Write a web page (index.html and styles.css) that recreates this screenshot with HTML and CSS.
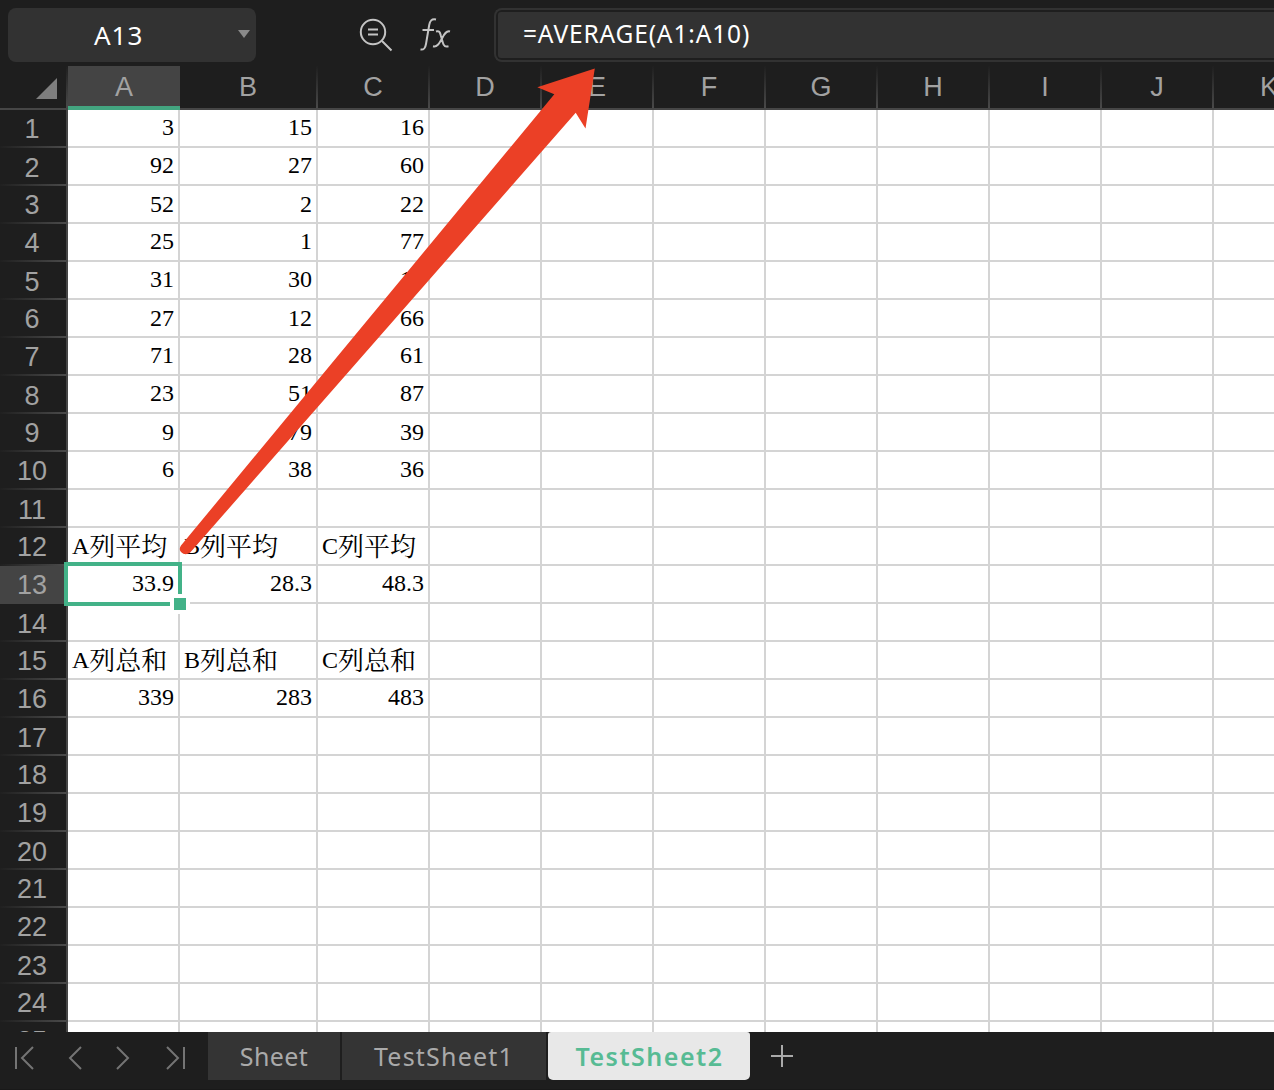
FILE: index.html
```html
<!DOCTYPE html>
<html lang="zh-CN">
<head>
<meta charset="utf-8">
<title>TestSheet2</title>
<link rel="stylesheet" href="styles.css">
</head>
<body>
<div class="app">
  <header class="toolbar">
    <div class="name-box"><span>A13</span><svg class="caret" width="12" height="8" viewBox="0 0 12 8"><path d="M0 0H12L6 8Z"/></svg></div>
    <div class="tools">
      <svg width="34" height="34" viewBox="0 0 34 34"><circle cx="14" cy="14" r="12.2"/><path d="M23 23L32.500 32.500M9 11.500H19M9 16.500H19"/></svg>
      <svg class="fx" width="32" height="34" viewBox="0 0 32 34"><path d="M16 1.500C11.500 .5 10 3 9.200 7L6 26C5.200 30.500 4 32 .5 31.500M2.500 12H14M16 13.500C19 12.500 20 14 20.800 17.500L22.800 24.500C23.800 28.500 25.500 29 28.500 28.200M30 13.500C26.500 12.500 24.500 15.500 22 20.500C19 26 17 29.300 13 28.200"/></svg>
    </div>
    <div class="formula"><div class="formula-text">=AVERAGE(A1:A10)</div></div>
  </header>

  <div class="columns">
    <div class="corner"><svg width="21" height="21" viewBox="0 0 21 21"><path d="M21 0V21H0Z"/></svg></div>
    <div class="col selected">A</div><div class="col wide">B</div><div class="col">C</div><div class="col">D</div><div class="col">E</div><div class="col">F</div><div class="col">G</div><div class="col">H</div><div class="col">I</div><div class="col">J</div><div class="col">K</div>
  </div>

  <main class="sheet">
    <div class="row"><b>1</b><i>3</i><i>15</i><i>16</i></div>
    <div class="row"><b>2</b><i>92</i><i>27</i><i>60</i></div>
    <div class="row"><b>3</b><i>52</i><i>2</i><i>22</i></div>
    <div class="row"><b>4</b><i>25</i><i>1</i><i>77</i></div>
    <div class="row"><b>5</b><i>31</i><i>30</i><i>17</i></div>
    <div class="row"><b>6</b><i>27</i><i>12</i><i>66</i></div>
    <div class="row"><b>7</b><i>71</i><i>28</i><i>61</i></div>
    <div class="row"><b>8</b><i>23</i><i>51</i><i>87</i></div>
    <div class="row"><b>9</b><i>9</i><i>79</i><i>39</i></div>
    <div class="row"><b>10</b><i>6</i><i>38</i><i>36</i></div>
    <div class="row"><b>11</b></div>
    <div class="row label"><b>12</b><i>A<span>列平均</span></i><i>B<span>列平均</span></i><i>C<span>列平均</span></i></div>
    <div class="row current"><b>13</b><i class="active">33.9<svg class="selection" width="126" height="52" viewBox="0 0 126 52"><path class="halo" d="M106 32H126V52H106Z"/><path d="M0 0H118V32H114V4H4V40H106V44H0ZM110 36H122V48H110Z"/></svg></i><i>28.3</i><i>48.3</i></div>
    <div class="row"><b>14</b></div>
    <div class="row label"><b>15</b><i>A<span>列总和</span></i><i>B<span>列总和</span></i><i>C<span>列总和</span></i></div>
    <div class="row"><b>16</b><i>339</i><i>283</i><i>483</i></div>
    <div class="row"><b>17</b></div>
    <div class="row"><b>18</b></div>
    <div class="row"><b>19</b></div>
    <div class="row"><b>20</b></div>
    <div class="row"><b>21</b></div>
    <div class="row"><b>22</b></div>
    <div class="row"><b>23</b></div>
    <div class="row"><b>24</b></div>
    <div class="row"><b>25</b></div>
  </main>

  <footer class="tabs">
    <div class="nav">
      <svg width="20" height="24" viewBox="0 0 20 24"><path d="M2 1V23M19 1L8 12L19 23"/></svg>
      <svg width="14" height="24" viewBox="0 0 14 24"><path d="M13 1L2 12L13 23"/></svg>
      <svg width="14" height="24" viewBox="0 0 14 24"><path d="M1 1L12 12L1 23"/></svg>
      <svg width="20" height="24" viewBox="0 0 20 24"><path d="M1 1L12 12L1 23M18 1V23"/></svg>
    </div>
    <div class="tab first">Sheet</div>
    <div class="tab second">TestSheet1</div>
    <div class="tab open">TestSheet2</div>
    <svg class="add" width="22" height="22" viewBox="0 0 22 22"><path d="M11 0V22M0 11H22"/></svg>
  </footer>

  <svg class="arrow" width="1274" height="1090" viewBox="0 0 1274 1090"><path d="M594.800 68.400L537.300 87.300L554.300 94.300L181 545.500Q178.500 549 181 552Q185 556 190 552.800L575.700 112.700L585.500 128.500Z"/></svg>
</div>
</body>
</html>
```
FILE: styles.css
```css
* { box-sizing: border-box; }
body { margin: 0; background: #1e1e1e; }
.app {
  position: relative;
  width: 1274px;
  height: 1090px;
  overflow: hidden;
  display: flex;
  flex-direction: column;
  font-family: "Noto Sans", sans-serif;
}

.toolbar { display: flex; height: 66px; padding: 8px 0 4px 8px; flex: none; }
.name-box {
  position: relative;
  width: 248px;
  height: 54px;
  border-radius: 8px;
  background: #323232;
  color: #fff;
  font-size: 26px;
  line-height: 54px;
  padding-left: 86px;
  letter-spacing: 1px;
}
.caret { position: absolute; right: 6px; top: 22px; fill: #8a8a8a; }
.tools { display: flex; width: 238px; padding: 10px 0 0 103px; gap: 27px; }
.tools svg { flex: none; fill: none; stroke: #c4c4c4; stroke-width: 2; }
.formula {
  flex: 1;
  height: 54px;
  border: 2px solid #323232;
  border-right: 0;
  border-radius: 8px 0 0 8px;
  padding: 2px 0 2px 2px;
}
.formula-text {
  height: 46px;
  border-radius: 3px 0 0 3px;
  background: #323232;
  color: #fff;
  font-size: 24.5px;
  line-height: 44px;
  letter-spacing: .85px;
  padding-left: 25px;
  white-space: nowrap;
}

.columns {
  display: flex;
  height: 44px;
  flex: none;
  border-bottom: 2px solid #464646;
  font: 27px/42px "Liberation Sans", Arial, sans-serif;
  color: #a2a2a2;
}
.corner, .col {
  flex: none;
  border-right: 2px solid;
  border-image: linear-gradient(#1e1e1e, #4a4a4a) 1;
  border-width: 0 2px 0 0;
}
.corner { width: 68px; padding: 12px 0 0 36px; }
.corner svg { display: block; fill: #7e7e7e; }
.col { width: 112px; text-align: center; }
.col.wide { width: 138px; }
.col.selected {
  height: 44px;
  border: 0;
  background: #444;
  border-bottom: 4px solid #43a580;
}

.sheet {
  height: 922px;
  flex: none;
  overflow: hidden;
  background:
    linear-gradient(#d4d4d4, #d4d4d4) 178px 0 / 2px 100% no-repeat,
    linear-gradient(#d4d4d4, #d4d4d4) 316px 0 / 2px 100% no-repeat,
    linear-gradient(90deg, #fff 318px, transparent 318px),
    linear-gradient(90deg, transparent 110px, #d4d4d4 110px) 318px 0 / 112px 100%,
    #fff;
}
.row {
  display: grid;
  grid-template-columns: 68px 112px 138px 112px;
  height: 38px;
  background: linear-gradient(#d4d4d4, #d4d4d4) 0 36px / 100% 2px no-repeat;
}
.row b {
  height: 38px;
  border-right: 2px solid #464646;
  background:
    linear-gradient(90deg, #202020, #4a4a4a) 0 36px / 100% 2px no-repeat,
    #1e1e1e;
  color: #a2a2a2;
  font: 27px/38px "Liberation Sans", Arial, sans-serif;
  text-align: center;
  padding-right: 2px;
}
.row i {
  font: normal 24px/34px "Liberation Serif", "Noto Sans CJK SC", serif;
  color: #000;
  text-align: right;
  padding-right: 6px;
  white-space: nowrap;
}
.row:nth-child(3n+2) b { line-height: 40px; }
.row:nth-child(3n) i { line-height: 36px; }
.label i { display: flex; padding-left: 4px; }
.label span {
  font: 400 26px/34px "Noto Serif CJK SC", "Noto Sans CJK SC", sans-serif;
}
.row.current b { background: #444; }
.active { position: relative; }
.selection { position: absolute; left: -4px; top: -4px; fill: #43b288; }
.halo { fill: #fff; }

.tabs { display: flex; height: 58px; flex: none; background: #1e1e1e; border-bottom: 1px solid #191919; }
.nav { display: flex; width: 208px; padding: 14px 0 0 14px; }
.nav svg { fill: none; stroke: #747474; stroke-width: 2; }
.nav svg:nth-child(2) { margin-left: 34px; }
.nav svg:nth-child(3) { margin-left: 34px; }
.nav svg:nth-child(4) { margin-left: 36px; }
.tab {
  height: 48px;
  background: #343434;
  color: #aaa;
  font-size: 25px;
  line-height: 49px;
  text-align: center;
  letter-spacing: 1.2px;
}
.first { width: 132px; margin-right: 2px; letter-spacing: .4px; }
.second { width: 204px; margin-right: 2px; }
.open {
  width: 202px;
  background: #e8e8e8;
  color: #57bb94;
  font-weight: 600;
  letter-spacing: 1.5px;
  padding-left: 1px;
  border-radius: 3px 3px 5px 5px;
}
.add { margin: 13px 0 0 21px; fill: none; stroke: #aaa; stroke-width: 2; }
.arrow { position: absolute; left: 0; top: 0; fill: #eb4026; pointer-events: none; }
```
